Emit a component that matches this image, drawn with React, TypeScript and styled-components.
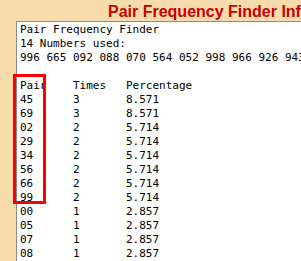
import styled, { createGlobalStyle } from 'styled-components'

const Global = createGlobalStyle`
	html, body {
		margin: 0;
		padding: 0;
		background: #f9dcab;
		overflow: hidden;
	}
`

const Page = styled.div`
	width: 301px;
	height: 261px;
	overflow: hidden;
	background: #f9dcab;
	display: flex;
	flex-direction: column;
`

const Title = styled.h1`
	margin: 0;
	height: 23px;
	box-sizing: border-box;
	padding: 3px 0 0 108px;
	font-family: "Liberation Sans", Arial, sans-serif;
	font-size: 16px;
	line-height: 18px;
	font-weight: bold;
	color: #c80000;
	white-space: nowrap;
`

const Panel = styled.div`
	position: relative;
	flex: auto;
	margin-left: 16px;
	width: 400px;
	background: #fff;
	border-top: 1px solid #8a8a8a;
	border-left: 1px solid #8a8a8a;
	padding: 1px 0 0 3px;

	font-family: "DejaVu Sans Mono", "Liberation Mono", monospace;
	font-size: 11px;
	line-height: 14px;
	color: #000;
	white-space: pre;
`

const Line = styled.div`
	height: 14px;
`

const Table = styled.div`
	position: relative;
`

const Row = styled.div`
	display: grid;
	grid-template-columns: 8ch 8ch auto;
	height: 14px;
`

const Highlight = styled.div<{ rows: number }>`
	position: absolute;
	left: -7px;
	top: -5px;
	width: 33px;
	height: ${props => props.rows * 14 + 4}px;
	box-sizing: border-box;
	border: 3px solid #f00;
	pointer-events: none;
`

const numbers = ['996', '665', '092', '088', '070', '564', '052', '998', '966', '926', '943', '345', '299', '769']

const pairs = [
	['45', '3', '8.571'],
	['69', '3', '8.571'],
	['02', '2', '5.714'],
	['29', '2', '5.714'],
	['34', '2', '5.714'],
	['56', '2', '5.714'],
	['66', '2', '5.714'],
	['99', '2', '5.714'],
	['00', '1', '2.857'],
	['05', '1', '2.857'],
	['07', '1', '2.857'],
	['08', '1', '2.857'],
]

const App = () => {
	// pairs seen more than once get the red box
	const marked = pairs.filter(p => Number(p[1]) > 1).length

	return (
		<Page>
			<Global />
			<Title>Pair Frequency Finder Info</Title>
			<Panel>
				<Line>Pair Frequency Finder</Line>
				<Line>{numbers.length} Numbers used:</Line>
				<Line>{numbers.join(' ')}</Line>
				<Line />
				<Table>
					<Row>
						<span>Pair</span>
						<span>Times</span>
						<span>Percentage</span>
					</Row>
					{pairs.map(([pair, times, pct]) => (
						<Row key={pair}>
							<span>{pair}</span>
							<span>{times}</span>
							<span>{pct}</span>
						</Row>
					))}
					<Highlight rows={marked + 1} />
				</Table>
			</Panel>
		</Page>
	)
}

export default App
